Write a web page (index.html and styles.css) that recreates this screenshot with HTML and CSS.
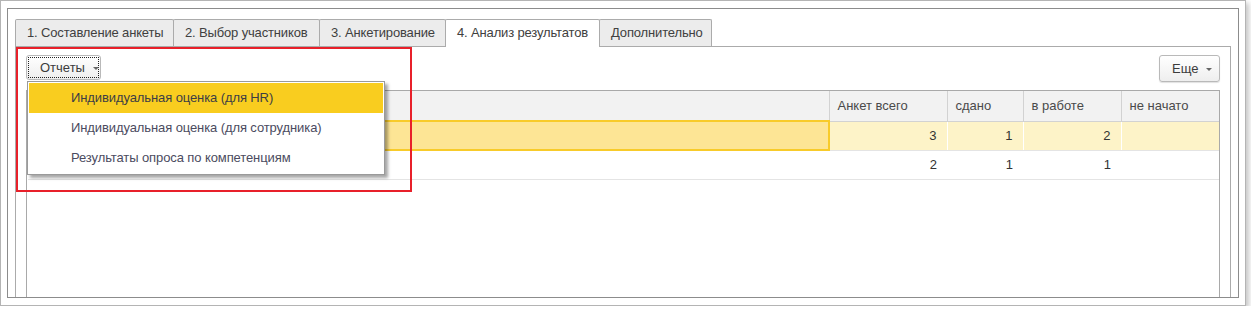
FILE: index.html
```html
<!DOCTYPE html>
<html lang="ru">
<head>
  <meta charset="UTF-8" />
  <title>Анализ результатов</title>
  <link rel="stylesheet" href="styles.css">
</head>
<body>
  <div class="window">
    <div class="frame">
      <div class="tabs">
        <div class="tab">1. Составление анкеты</div>
        <div class="tab">2. Выбор участников</div>
        <div class="tab">3. Анкетирование</div>
        <div class="tab active">4. Анализ результатов</div>
        <div class="tab">Дополнительно</div>
      </div>

      <div class="panel">
        <div class="toolbar">
          <button class="btn btn-reports"><span class="focus">Отчеты <i class="caret"></i></span></button>
          <button class="btn btn-more">Еще <i class="caret"></i></button>
        </div>

        <div class="grid">
          <table>
            <colgroup>
              <col style="width:801px">
              <col style="width:118px">
              <col style="width:76px">
              <col style="width:98px">
              <col>
            </colgroup>
            <thead>
              <tr>
                <th></th>
                <th>Анкет всего</th>
                <th>сдано</th>
                <th>в работе</th>
                <th>не начато</th>
              </tr>
            </thead>
            <tbody>
              <tr class="selected">
                <td class="current"></td>
                <td>3</td>
                <td>1</td>
                <td>2</td>
                <td></td>
              </tr>
              <tr>
                <td></td>
                <td>2</td>
                <td>1</td>
                <td>1</td>
                <td></td>
              </tr>
            </tbody>
          </table>
        </div>

        <!-- popup of the "Отчеты" button -->
        <ul class="menu">
          <li class="hover">Индивидуальная оценка (для HR)</li>
          <li>Индивидуальная оценка (для сотрудника)</li>
          <li>Результаты опроса по компетенциям</li>
        </ul>

        <div class="highlight"></div>
      </div>
    </div>
  </div>
</body>
</html>
```

FILE: styles.css
```css
* {
  box-sizing: border-box;
}

body {
  margin: 0;
  font-family: "Liberation Sans", Arial, sans-serif;
  font-size: 13px;
  color: #444;
  background: #fff;
}

.window {
  width: 1246px;
  height: 306px;
  padding: 7px 6px 7px 6px;
  border: 1px solid #b4b4b4;
  background: #fff;
  box-shadow: 3px 3px 5px rgba(0, 0, 0, 0.22);
}

.frame {
  height: 100%;
  display: flex;
  flex-direction: column;
  padding: 10px 7px 0 7px;
  border: 1px solid #8c8c8c;
}

/* tabs */
.tabs {
  display: flex;
  height: 27px;
}

.tab {
  height: 27px;
  line-height: 25px;
  padding: 0 0 0 11px;
  margin-right: -1px;
  border: 1px solid #ababab;
  border-bottom: none;
  border-radius: 2px 2px 0 0;
  background: #ececec;
  color: #404040;
  letter-spacing: -0.15px;
  white-space: nowrap;
}

.tab:nth-child(1) { width: 159px; }
.tab:nth-child(2) { width: 147px; }
.tab:nth-child(3) { width: 127px; }
.tab:nth-child(4) { width: 155px; }
.tab:nth-child(5) { width: 113px; }

.tab.active {
  position: relative;
  z-index: 1;
  height: 28px;
  background: #fff;
}

.panel {
  position: relative;
  flex: 1;
  display: flex;
  flex-direction: column;
  padding: 8px 10px 0 10px;
  border: 1px solid #ababab;
  border-bottom: none;
}

/* toolbar */
.toolbar {
  display: flex;
  justify-content: space-between;
  height: 26px;
  margin-bottom: 9px;
}

.btn {
  font: inherit;
  color: #3c3c3c;
  background: linear-gradient(#fff, #eeeeee);
  border: 1px solid #b9b9b9;
  border-radius: 3px;
  padding: 0;
  white-space: nowrap;
  cursor: pointer;
}

.btn-reports {
  width: 75px;
  height: 25px;
  padding: 1px;
}

.btn-reports .focus {
  display: block;
  height: 100%;
  line-height: 19px;
  padding-left: 11px;
  text-align: left;
  border: 1px dotted #222;
}

.btn-more {
  width: 61px;
  height: 27px;
  line-height: 24px;
  padding-left: 12px;
  text-align: left;
  box-shadow: 0 1px 1px rgba(0, 0, 0, 0.12);
}

.caret {
  display: inline-block;
  margin-left: 4px;
  vertical-align: 2px;
  border-left: 3px solid transparent;
  border-right: 3px solid transparent;
  border-top: 3px solid #666;
}

/* table */
.grid {
  flex: 1;
  border: 1px solid #a9a9a9;
  border-bottom: none;
}

table {
  width: 100%;
  table-layout: fixed;
  border-collapse: collapse;
}

th {
  height: 30px;
  padding: 0 8px;
  text-align: left;
  font-weight: normal;
  color: #4a4a4a;
  background: #f2f2f2;
  border-left: 1px solid #d2d2d2;
  border-bottom: 1px solid #d2d2d2;
}

th:first-child {
  border-left: none;
}

td {
  height: 29px;
  padding: 0 10px;
  text-align: right;
  color: #333;
  border-bottom: 1px solid #e4e4e4;
}

tr.selected td {
  background: #fdf3c8;
  border-left: 1px solid #fff;
}

tr.selected td.current {
  background: #fde595;
  border: 2px solid #f8cb2a;
}

/* popup menu */
.menu {
  position: absolute;
  left: 11px;
  top: 34px;
  z-index: 2;
  width: 358px;
  margin: 0;
  padding: 1px;
  list-style: none;
  background: #fff;
  border: 1px solid #9a9a9a;
  box-shadow: 3px 3px 3px rgba(0, 0, 0, 0.35);
}

.menu li {
  height: 30px;
  line-height: 29px;
  padding-left: 42px;
  color: #4b4b60;
  letter-spacing: -0.1px;
}

.menu li.hover {
  background: #f9cd1f;
  color: #3d3d45;
}

.highlight {
  position: absolute;
  left: 0;
  top: 0;
  z-index: 3;
  width: 396px;
  height: 145px;
  border: 2px solid #e8202a;
  pointer-events: none;
}
```
